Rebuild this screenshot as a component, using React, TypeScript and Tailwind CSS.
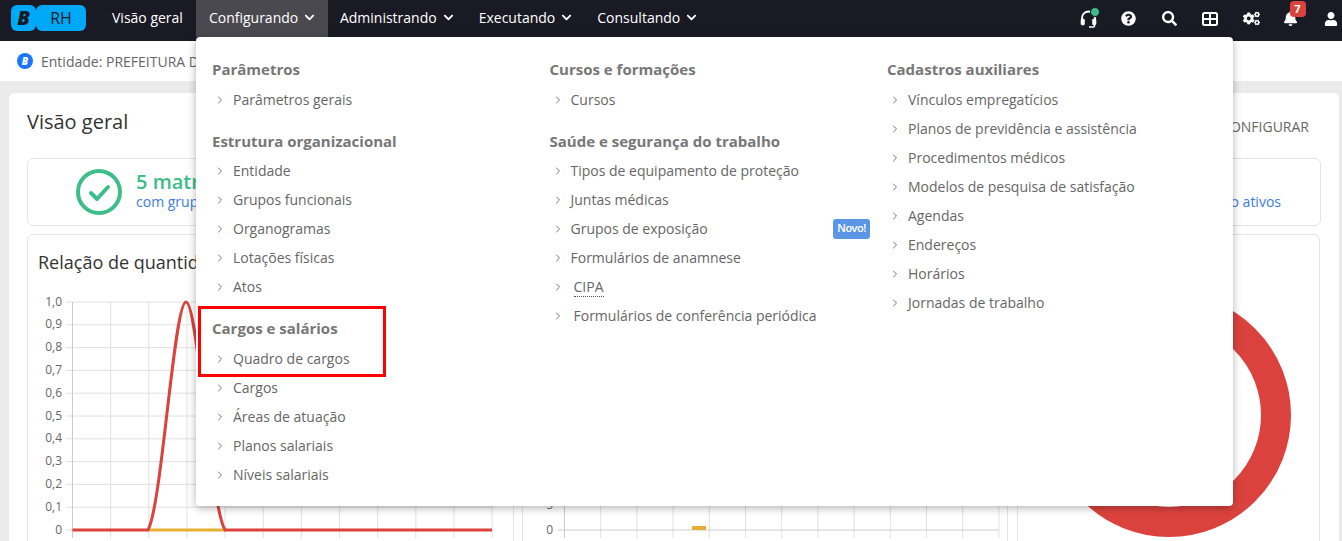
import { ChevronRight } from 'lucide-react';
import { FaBell, FaChevronDown, FaCogs, FaQuestionCircle, FaSearch, FaUser } from 'react-icons/fa';

const navItems = ['Administrando', 'Executando', 'Consultando'];

const columnas = [
  [
    { titulo: 'Parâmetros', items: ['Parâmetros gerais'] },
    { titulo: 'Estrutura organizacional', items: ['Entidade', 'Grupos funcionais', 'Organogramas', 'Lotações físicas', 'Atos'] },
    { titulo: 'Cargos e salários', items: ['Quadro de cargos', 'Cargos', 'Áreas de atuação', 'Planos salariais', 'Níveis salariais'] },
  ],
  [
    { titulo: 'Cursos e formações', items: ['Cursos'] },
    {
      titulo: 'Saúde e segurança do trabalho',
      items: ['Tipos de equipamento de proteção', 'Juntas médicas', 'Grupos de exposição', 'Formulários de anamnese', 'CIPA', 'Formulários de conferência periódica'],
    },
  ],
  [
    {
      titulo: 'Cadastros auxiliares',
      items: ['Vínculos empregatícios', 'Planos de previdência e assistência', 'Procedimentos médicos', 'Modelos de pesquisa de satisfação', 'Agendas', 'Endereços', 'Horários', 'Jornadas de trabalho'],
    },
  ],
];

const MenuItem = ({ label }: { label: string }) => {
  const indentado = label === 'CIPA' || label === 'Formulários de conferência periódica';
  return (
    <div className="flex h-[29px] items-center pl-[2px] text-[14px] text-[#666]">
      <ChevronRight size={12} strokeWidth={1.8} className="mt-[1px] shrink-0 text-[#666]" />
      <span className={indentado ? 'ml-[10px]' : 'ml-[7px]'}>
        {label === 'CIPA' ? <span className="border-b border-dotted border-[#555] leading-[18px]">{label}</span> : label}
      </span>
      {label === 'Grupos de exposição' && (
        <span className="ml-auto mr-[17px] flex h-[20px] w-[37px] items-center justify-center rounded-[3px] bg-[#5b96e5] text-[11px] font-semibold tracking-[-0.5px] text-white">
          Novo!
        </span>
      )}
    </div>
  );
};

const ChartEsquerda = () => {
  const labels = ['1,0', '0,9', '0,8', '0,7', '0,6', '0,5', '0,4', '0,3', '0,2', '0,1', '0'];
  return (
    <svg width="486" height="270" viewBox="28 285 486 270" className="block">
      {labels.map((l, i) => {
        const y = 302 + i * 22.8;
        return (
          <g key={l}>
            <line x1="66" x2="492" y1={y} y2={y} stroke="#e0e0e0" />
            <text x="62" y={y + 3.5} textAnchor="end" fontSize="12" fill="#666">{l}</text>
          </g>
        );
      })}
      {Array.from({ length: 12 }).map((_, i) => {
        const x = 72.5 + i * 38.15;
        return <line key={i} x1={x} x2={x} y1="302" y2="538" stroke={i === 0 ? '#ccc' : '#e0e0e0'} />;
      })}
      <line x1="148" x2="225" y1="530" y2="530" stroke="#e6b032" strokeWidth="3" />
      <path
        d="M72.5 530 L148 530 C162 505 174 302 186 302 C198 302 210 505 225 530 L492 530"
        fill="none"
        stroke="#dc423d"
        strokeWidth="3"
      />
    </svg>
  );
};

const ChartMeio = () => (
  <svg width="484" height="270" viewBox="523 285 484 270" className="block">
    <line x1="558" x2="999" y1="505" y2="505" stroke="#e0e0e0" />
    <text x="553" y="509" textAnchor="end" fontSize="12" fill="#666">5</text>
    <text x="553" y="534" textAnchor="end" fontSize="12" fill="#666">0</text>
    {Array.from({ length: 13 }).map((_, i) => {
      const x = 564.5 + i * 36.2;
      return <line key={i} x1={x} x2={x} y1="500" y2="538" stroke={i === 0 ? '#ccc' : '#e0e0e0'} />;
    })}
    <line x1="558" x2="999" y1="530" y2="530" stroke="#ccc" />
    <rect x="692" y="526" width="14" height="4" fill="#e6b032" />
  </svg>
);

export default function App() {
  return (
    <div className="relative h-[541px] w-[1342px] overflow-hidden bg-[#ebebeb] font-['Open_Sans',sans-serif]">
      {/* HEADER */}
      <header className="flex h-[41px] items-start bg-[#1a1a24] text-[14px] text-white">
        <div className="ml-[11px] mt-[5px] flex h-[26px] w-[75px]">
          <span className="flex w-[25px] items-center justify-center rounded-[6px] bg-[#00a8f8] text-[20px] font-extrabold italic text-[#1a1a24]">B</span>
          <span className="flex flex-1 items-center justify-center rounded-[6px] bg-[#00a8f8] text-[16px] text-[#1a1a24]">RH</span>
        </div>
        <span className="ml-[26px] flex h-[35px] items-center">Visão geral</span>
        <div className="ml-[13px] flex h-[37px] w-[132px] items-center gap-[6px] bg-[#4a494f] pb-[2px] pl-[13px]">
          Configurando <FaChevronDown size={11} />
        </div>
        {navItems.map((n, i) => (
          <div key={n} className={`flex h-[35px] items-center gap-[6px] ${i === 0 ? 'ml-[12px]' : 'ml-[25px]'}`}>
            {n} <FaChevronDown size={11} />
          </div>
        ))}
        <div className="ml-auto mr-[1px] flex h-[37px] items-center gap-[20.5px]">
          <div className="relative flex w-[20px] justify-center">
            <svg width="17" height="18" viewBox="0 0 17 18" fill="none" stroke="white" className="block">
              <path d="M2 10V8a6.5 6.5 0 0 1 13 0v2" strokeWidth="1.8" />
              <rect x="1" y="9" width="3.5" height="6" rx="1.2" fill="white" strokeWidth="0.6" />
              <rect x="12.5" y="9" width="3.5" height="6" rx="1.2" fill="white" strokeWidth="0.6" />
              <path d="M14.5 15v1a1 1 0 0 1-1 1H9" strokeWidth="1.4" />
            </svg>
            <span className="absolute -right-[2px] -top-[3px] h-[10px] w-[10px] rounded-full border border-[#1a1a24] bg-[#3dbd8a]" />
          </div>
          <div className="flex w-[20px] justify-center"><FaQuestionCircle size={15} /></div>
          <div className="flex w-[20px] justify-center"><FaSearch size={15} /></div>
          <div className="flex w-[20px] justify-center">
            <svg width="16" height="14" viewBox="0 0 16 14" fill="none" stroke="white" strokeWidth="2">
              <rect x="1" y="1" width="14" height="12" rx="1.5" />
              <path d="M1 7h14M8 1v12" />
            </svg>
          </div>
          <div className="flex w-[20px] justify-center"><FaCogs size={19} className="ml-[3px]" /></div>
          <div className="relative flex w-[20px] justify-center">
            <FaBell size={15} />
            <span className="absolute -right-[5px] -top-[10px] flex h-[16px] w-[16px] items-center justify-center rounded-[4px] bg-[#dc423d] text-[11px] font-bold">7</span>
          </div>
          <div className="flex w-[20px] justify-center"><FaUser size={14} /></div>
        </div>
      </header>

      {/* ENTIDADE */}
      <div className="flex h-[40px] items-center gap-[8px] bg-white pl-[17px] text-[14px] text-[#666]">
        <span className="flex h-[16px] w-[16px] items-center justify-center rounded-full bg-[#1a76ff] text-[10px] font-extrabold italic text-white">B</span>
        Entidade: PREFEITURA DE
      </div>

      {/* CONTENIDO */}
      <main className="pl-[9px] pr-[3px] pt-[12px]">
        <div className="h-[460px] rounded-t-[5px] bg-white px-[18px]">
          <div className="flex h-[65px] items-start justify-between">
            <h1 className="mt-[14px] text-[20px] leading-[30px] text-[#333]">Visão geral</h1>
            <span className="mr-[12px] mt-[23px] text-[14px] text-[#666]">CONFIGURAR</span>
          </div>

          <div className="flex h-[68px] items-center justify-between rounded-[6px] border border-[#e4e4e4] pl-[48px] pr-[39px]">
            <div className="flex items-center gap-[14px]">
              <svg width="46" height="46" viewBox="0 0 46 46" fill="none" stroke="#3dbd8a">
                <circle cx="23" cy="23" r="21" strokeWidth="4" />
                <path d="M15 24l6 6 11-12" strokeWidth="4" strokeLinecap="round" strokeLinejoin="round" />
              </svg>
              <div className="-mt-[4px]">
                <div className="text-[20px] font-semibold leading-[24px] text-[#3dbd8a]">5 matrículas</div>
                <div className="text-[14px] leading-[16px] text-[#3b7ddd]">com grupos</div>
              </div>
            </div>
            <span className="mt-[18px] text-[14px] text-[#3b7ddd]">grupo ativos</span>
          </div>

          <div className="mt-[8px] grid grid-cols-[487px_486px_304px] gap-x-[8px]">
            <section className="h-[320px] rounded-[6px] border border-[#e4e4e4]">
              <h2 className="ml-[10px] mt-[14px] text-[18px] leading-[27px] text-[#333]">Relação de quantidade</h2>
              <div className="mt-[9px]"><ChartEsquerda /></div>
            </section>
            <section className="h-[320px] rounded-[6px] border border-[#e4e4e4] pt-[50px]">
              <ChartMeio />
            </section>
            <section className="ml-[1px] flex h-[320px] justify-center rounded-[6px] border border-[#e4e4e4] pt-[58px]">
              <svg width="244" height="244" viewBox="0 0 244 244" fill="none" className="block">
                <circle cx="122" cy="122" r="107" stroke="#dc423d" strokeWidth="30" />
              </svg>
            </section>
          </div>
        </div>
      </main>

      {/* MENU CONFIGURANDO */}
      <div className="absolute left-[196px] top-[37px] flex h-[469px] w-[1037px] rounded-[4px] bg-white pl-[16px] pt-[17px] shadow-[0_2px_8px_rgba(0,0,0,0.3)]">
        {columnas.map((col, i) => (
          <div key={i} className="w-[337.5px]">
            {col.map(sec => (
              <div key={sec.titulo} className="mb-[12px]">
                <div className="flex h-[30.5px] items-center text-[15px] font-bold text-[#777]">{sec.titulo}</div>
                {sec.items.map(it => <MenuItem key={it} label={it} />)}
              </div>
            ))}
          </div>
        ))}
      </div>

      {/* DESTAQUE */}
      <div className="absolute left-[198px] top-[306px] h-[71px] w-[188px] border-[3px] border-[#ff0000]" />
    </div>
  );
}
